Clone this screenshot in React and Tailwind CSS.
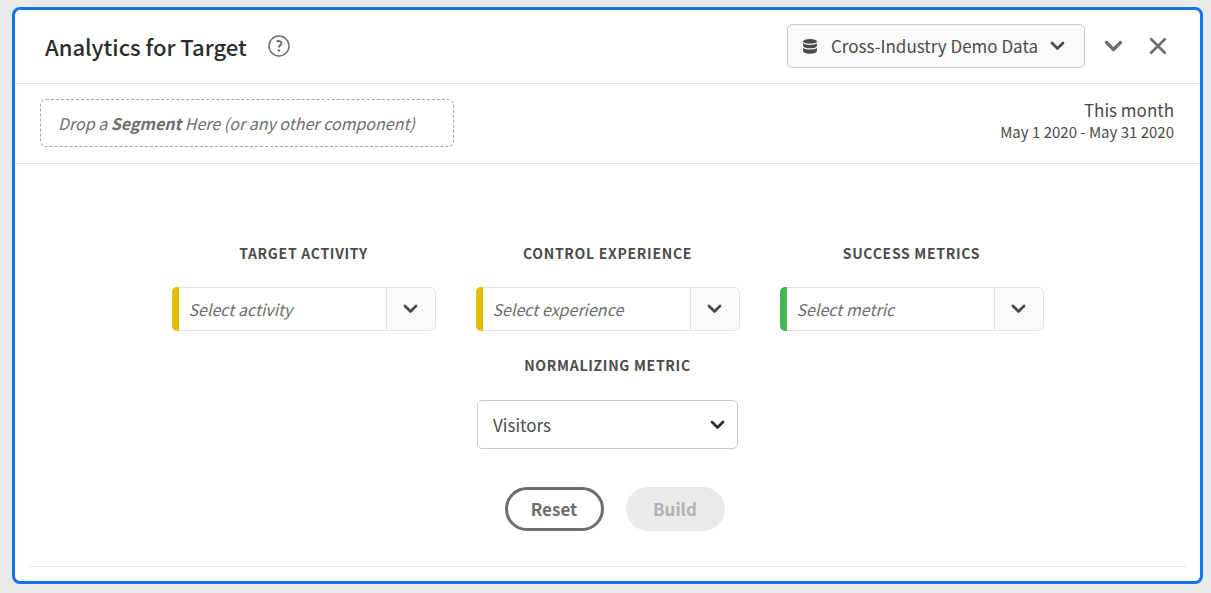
import { useState } from "react";

function Chevron({ className, width = 15 }) {
  return (
    <svg className={className} width={width} viewBox="0 0 15 10" fill="none" aria-hidden="true">
      <path d="M2 2 7.500 7.500 13 2" stroke="currentColor" strokeWidth="2.700" strokeLinecap="round" strokeLinejoin="round" />
    </svg>
  );
}

function DatabaseIcon() {
  return (
    <svg width="14" height="15" viewBox="0 0 14 15" fill="currentColor" aria-hidden="true">
      <ellipse cx="7" cy="2.400" rx="6.900" ry="2.300" />
      <path d="M.1 4.300C1.600 5.500 4.200 6 7 6s5.400-.5 6.900-1.700v2.400C13.900 8.300 10.800 9.300 7 9.300S.1 8.300.1 6.700z" />
      <path d="M.1 8.900c1.500 1.200 4.100 1.700 6.900 1.700s5.400-.5 6.900-1.700v3.100c0 1.600-3.100 2.700-6.900 2.700S.1 13.600.1 12z" />
    </svg>
  );
}

function HelpIcon() {
  return (
    <svg width="22" height="22" viewBox="0 0 22 22" fill="none" stroke="currentColor" aria-hidden="true">
      <circle cx="11" cy="11" r="10" strokeWidth="1.500" />
      <path d="M8.500 6.700c2-1.200 4.900-.8 4.900 1.400 0 2-2.500 2.300-2.500 4.400" strokeWidth="2" />
      <circle cx="10.900" cy="15.500" r="1.300" fill="currentColor" stroke="none" />
    </svg>
  );
}

function CloseIcon() {
  return (
    <svg width="18" height="18" viewBox="0 0 18 18" fill="none" aria-hidden="true">
      <path d="M2.200 2.200l13.600 13.600M15.800 2.200 2.200 15.800" stroke="currentColor" strokeWidth="2.700" strokeLinecap="round" />
    </svg>
  );
}

const labelClass = "text-sm leading-5 font-bold tracking-wider uppercase text-[#4b4b4b]";

function ComponentPicker({ id, label, placeholder, accent }) {
  const [value, setValue] = useState("");
  return (
    <div className="flex w-[264px] flex-col items-center gap-6">
      <label htmlFor={id} className={labelClass}>{label}</label>
      <div className="flex h-11 w-full overflow-hidden rounded-[5px]">
        <span className={`w-[7px] shrink-0 ${accent}`} />
        <input
          id={id}
          value={value}
          onChange={(e) => setValue(e.target.value)}
          placeholder={placeholder}
          className="min-w-0 flex-1 border-y border-[#e1e1e1] bg-white pl-[10px] text-base text-[#4b4b4b] italic outline-none placeholder:text-[#6e6e6e]"
        />
        <button
          type="button"
          aria-label={`Open ${label}`}
          className="flex w-[50px] shrink-0 items-center justify-center rounded-r-[5px] border border-[#e1e1e1] bg-[#fafafa] text-[#4b4b4b]"
        >
          <Chevron />
        </button>
      </div>
    </div>
  );
}

export default function App() {
  return (
    <div className="min-h-screen bg-[#eaeaea] pt-[7px] pr-2 pb-[9px] pl-3 font-['Noto_Sans_CJK_SC',sans-serif] text-[#4b4b4b]">
      <main className="rounded-lg border-3 border-[#1473e6] bg-white">
        <header className="flex items-center justify-between border-b border-[#e1e1e1] pt-[14px] pr-[33px] pb-[15px] pl-[30px]">
          <div className="flex items-center gap-[21px]">
            <h1 className="text-[22px] leading-8 font-medium text-[#2c2c2c]">Analytics for Target</h1>
            <button type="button" aria-label="Help" className="text-[#6e6e6e]">
              <HelpIcon />
            </button>
          </div>
          <div className="flex items-center">
            <button type="button" className="flex h-11 items-center rounded-[5px] border border-[#cacaca] bg-[#fafafa] pr-[19px] pl-[15px] text-[17px]">
              <DatabaseIcon />
              <span className="mr-3 ml-[14px]">Cross-Industry Demo Data</span>
              <Chevron />
            </button>
            <button type="button" aria-label="Collapse panel" className="ml-[19px] text-[#6e6e6e]">
              <Chevron width={19} />
            </button>
            <button type="button" aria-label="Close panel" className="ml-[26px] text-[#6e6e6e]">
              <CloseIcon />
            </button>
          </div>
        </header>

        <section className="flex items-start justify-between border-b border-[#e1e1e1] pt-[15px] pr-[26px] pb-4 pl-[25px]">
          <div className="flex h-12 w-[414px] items-center rounded-md border border-dashed border-[#a5a5a5] pl-[17px] text-base text-[#6e6e6e] italic">
            <p>Drop a <strong>Segment</strong> Here (or any other component)</p>
          </div>
          <button type="button" className="text-right">
            <span className="block text-[17px] leading-[22px]">This month</span>
            <span className="block text-[15px] leading-[22px]">May 1 2020 - May 31 2020</span>
          </button>
        </section>

        <form className="flex flex-col items-center pt-[79px]" onSubmit={(e) => e.preventDefault()}>
          <div className="flex gap-10">
            <ComponentPicker id="activity" label="Target Activity" placeholder="Select activity" accent="bg-[#dfbf00]" />
            <ComponentPicker id="experience" label="Control Experience" placeholder="Select experience" accent="bg-[#dfbf00]" />
            <ComponentPicker id="metric" label="Success Metrics" placeholder="Select metric" accent="bg-[#44b556]" />
          </div>

          <label htmlFor="normalizing" className={`${labelClass} mt-6`}>Normalizing Metric</label>
          <div className="relative mt-[25px] w-[261px]">
            <select id="normalizing" className="block h-[49px] w-full appearance-none rounded-[5px] border border-[#cacaca] bg-white pl-[15px] text-[17px]">
              <option>Visitors</option>
            </select>
            <Chevron className="pointer-events-none absolute top-5 right-[13px] text-[#2c2c2c]" />
          </div>

          <div className="mt-[38px] flex gap-[22px] pl-[14px] text-[17px] font-bold">
            <button type="reset" className="h-11 w-[99px] rounded-full border-3 border-[#6e6e6e] text-[#6e6e6e]">Reset</button>
            <button type="submit" disabled className="h-11 w-[99px] rounded-full bg-[#eaeaea] text-[#b3b3b3]">Build</button>
          </div>
        </form>

        <hr className="mx-[14px] mt-[35px] mb-[14px] border-[#e6e6e6]" />
      </main>
    </div>
  );
}
